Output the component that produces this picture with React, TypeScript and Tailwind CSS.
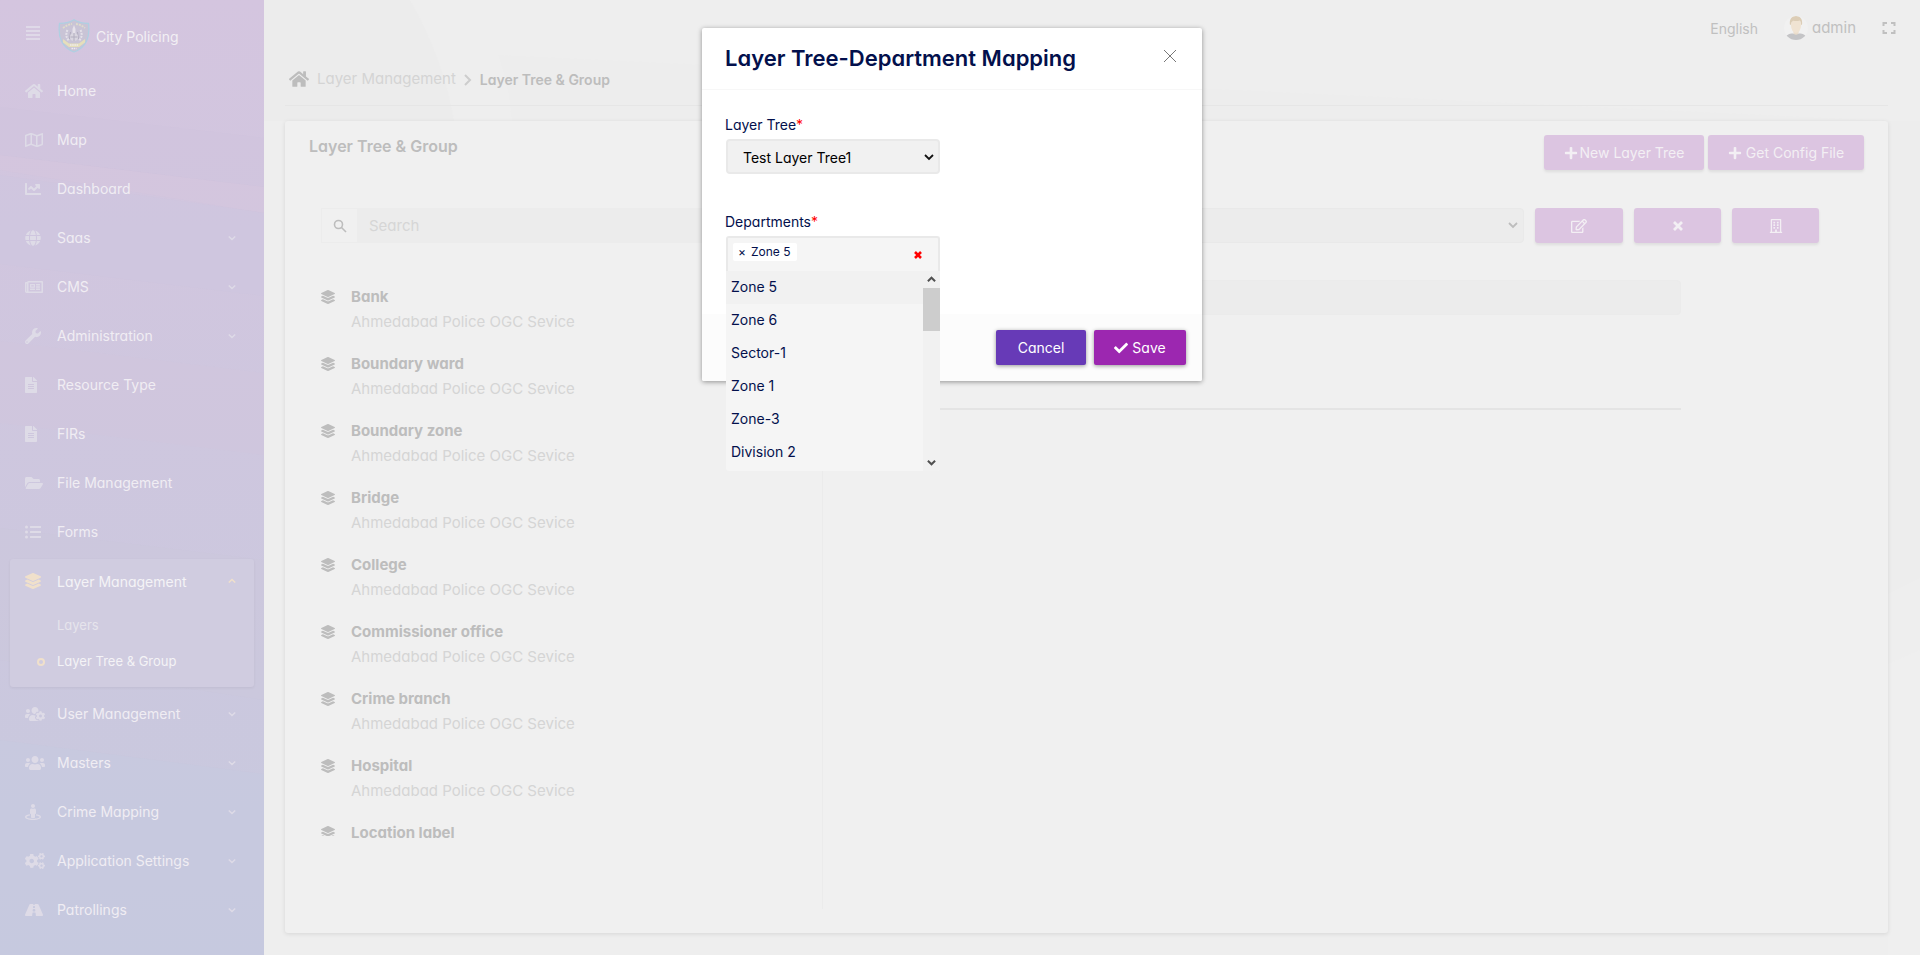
import React from "react";
import {
  FaHome, FaRegMap, FaChartLine, FaGlobe, FaRegNewspaper, FaWrench, FaFileAlt,
  FaFolderOpen, FaListUl, FaLayerGroup, FaUsersCog, FaUsers, FaStreetView, FaCogs,
  FaRoad, FaRegEdit, FaTimes, FaRegBuilding, FaPlus, FaCheck,
} from "react-icons/fa";
import type { IconType } from "react-icons";

type Item = { label: string; icon: IconType; size: string; more?: boolean };

const topItems: Item[] = [
  { label: "Home", icon: FaHome, size: "h-4 w-[18px]" },
  { label: "Map", icon: FaRegMap, size: "h-4 w-[18px]" },
  { label: "Dashboard", icon: FaChartLine, size: "h-4 w-4" },
  { label: "Saas", icon: FaGlobe, size: "h-4 w-4", more: true },
  { label: "CMS", icon: FaRegNewspaper, size: "h-4 w-[18px]", more: true },
  { label: "Administration", icon: FaWrench, size: "h-4 w-4", more: true },
  { label: "Resource Type", icon: FaFileAlt, size: "h-4 w-3" },
  { label: "FIRs", icon: FaFileAlt, size: "h-4 w-3" },
  { label: "File Management", icon: FaFolderOpen, size: "h-4 w-[18px]" },
  { label: "Forms", icon: FaListUl, size: "h-4 w-4" },
];

const bottomItems: Item[] = [
  { label: "User Management", icon: FaUsersCog, size: "h-4 w-5", more: true },
  { label: "Masters", icon: FaUsers, size: "h-4 w-5", more: true },
  { label: "Crime Mapping", icon: FaStreetView, size: "h-4 w-4", more: true },
  { label: "Application Settings", icon: FaCogs, size: "h-4 w-5", more: true },
  { label: "Patrollings", icon: FaRoad, size: "h-4 w-[18px]", more: true },
];

const service = "Ahmedabad Police OGC Sevice";

const layers: { name: string; source?: string }[] = [
  { name: "Bank", source: service },
  { name: "Boundary ward", source: service },
  { name: "Boundary zone", source: service },
  { name: "Bridge", source: service },
  { name: "College", source: service },
  { name: "Commissioner office", source: service },
  { name: "Crime branch", source: service },
  { name: "Hospital", source: service },
  { name: "Location label" },
];

const departments = ["Zone 5", "Zone 6", "Sector-1", "Zone 1", "Zone-3", "Division 2"];

function Chevron({ className, up = false }: { className: string; up?: boolean }) {
  return (
    <svg viewBox="0 0 10 10" className={className} fill="none" stroke="currentColor" aria-hidden="true">
      <path d={up ? "M1 7l4-4 4 4" : "M1 3l4 4 4-4"} strokeWidth="1.8" />
    </svg>
  );
}

function Crest() {
  return (
    <svg viewBox="0 0 32 34" className="h-[34px] w-8 shrink-0" aria-hidden="true">
      <path d="M16 .8c4 2.600 9 3.600 14.500 3.500.8 6 .8 12-2 18-2.400 5-7 8.700-12.500 10.700C10.500 31 5.900 27.300 3.500 22.300.7 16.300.7 10.300 1.500 4.300 7 4.400 12 3.400 16 .8z" fill="#c9c4d6" stroke="#aed0e2" strokeWidth="1.200" />
      <path d="M5 9c3-2.500 6-3.500 9-4M18 5c3 .5 6 1.500 9 4" fill="none" stroke="#dfdccb" strokeWidth="1.800" strokeDasharray="2 1" />
      <path d="M16 6l1.500 4v6h-3v-6z" fill="#e6e2ea" />
      <path d="M9.500 11c-2 4-1.500 8 2 11M22.500 11c2 4 1.500 8-2 11" fill="none" stroke="#e4e1e9" strokeWidth="2" strokeDasharray="2 1" />
      <path d="M12.500 13l-1 7M19.500 13l1 7" stroke="#b2aebf" strokeWidth="1" />
      <circle cx="16" cy="18" r="4" fill="#d9d6e0" />
      <path d="M16 14v8M12.500 18h7" stroke="#b2aebf" strokeWidth="1" />
      <path d="M5 20l6 4.500h10l6-4.500v3.500L21 28H11l-6-4.500z" fill="#e5dfbb" />
      <path d="M12 26h8M13.500 29.500h5" stroke="#eeeaf0" strokeWidth="1.500" strokeDasharray="1.500 .7" />
    </svg>
  );
}

function Avatar() {
  return (
    <svg viewBox="0 0 24 24" className="size-6" aria-hidden="true">
      <defs>
        <clipPath id="avatar-round"><circle cx="12" cy="12" r="12" /></clipPath>
      </defs>
      <g clipPath="url(#avatar-round)">
        <rect width="24" height="24" fill="#f1f1f1" />
        <path d="M9.500 14h5v5h-5z" fill="#e9dccb" />
        <path d="M1 24c0-5 4-6.500 8-6.500 1.500 1.500 4.500 1.500 6 0 4 0 8 1.500 8 6.500z" fill="#c4c4c6" />
        <ellipse cx="12" cy="9.500" rx="5" ry="7.500" fill="#f0e3d2" />
        <path d="M6 9C5 3 8 0 12 0s7 3 6 9l-1-.5c0-2-.5-3.500-1.500-4-2 1.200-5 .3-6.500.3-1.200.7-2 2-2 3.700z" fill="#dccdb6" />
      </g>
    </svg>
  );
}

function MenuItem({ item }: { item: Item }) {
  const Icon = item.icon;
  return (
    <li>
      <a href="#" className="flex h-[49px] items-center pl-[25px] pr-7 text-[14px] text-[#f0edf3]">
        <span className="flex w-8 text-[#dedbe7]"><Icon className={item.size} /></span>
        <span className="flex-1">{item.label}</span>
        {item.more && <Chevron className="size-2 text-[#dedbe7]" />}
      </a>
    </li>
  );
}

function Sidebar() {
  return (
    <aside className="relative w-[264px] shrink-0 overflow-hidden bg-gradient-to-b from-[#d4c5df] to-[#c7c9de]">
      <svg className="absolute inset-0 size-full" viewBox="0 0 264 955" preserveAspectRatio="none" aria-hidden="true">
        <path d="M0 107L264 138V187L0 155z" fill="#cfc4de" opacity=".5" />
        <path d="M0 155L264 187V213L0 170z" fill="#d5c5de" opacity=".5" />
        <path d="M0 175L264 213V296L0 264z" fill="#cec5df" opacity=".5" />
        <path d="M0 341L264 373V455L0 423z" fill="#d2c6dc" opacity=".35" />
        <path d="M0 528L264 560V700L0 660z" fill="#cbc7dc" opacity=".5" />
        <path d="M0 740L264 774V955H0z" fill="#c5cadf" opacity=".5" />
      </svg>
      <div className="relative">
        <div className="flex h-[66px] items-center pb-0.5 pl-[26px] pt-2">
          <button type="button" aria-label="Toggle menu" className="mb-1.5 mr-4 flex w-4 flex-col gap-0.5 pr-0.5">
            <span className="h-0.5 bg-[#dfd9e8]" />
            <span className="h-0.5 bg-[#dfd9e8]" />
            <span className="h-0.5 bg-[#dfd9e8]" />
            <span className="h-0.5 bg-[#dfd9e8]" />
          </button>
          <Crest />
          <span className="ml-1.5 text-[14px] text-[#f2f0f4]">City Policing</span>
        </div>
        <nav>
          <ul>{topItems.map((i) => <MenuItem key={i.label} item={i} />)}</ul>
          <div className="mx-[10px] mb-0.5 mt-[3px] h-32 rounded-[3px] bg-[#d0cce0] shadow-[0_1px_3px_rgba(0,0,0,0.06)]">
            <a href="#" className="flex h-11 items-center pl-[15px] pr-[18px] text-[14px] text-[#f4f3f6]">
              <span className="flex w-8"><FaLayerGroup className="size-4 text-[#f0e0cb]" /></span>
              <span className="flex-1">Layer Management</span>
              <Chevron up className="size-2 text-[#f0e0cb]" />
            </a>
            <a href="#" className="flex h-[45px] items-center pl-[47px] text-[13px] text-[#e6e4ec]">Layers</a>
            <a href="#" className="flex h-7 items-center pl-[27px] text-[13px] text-[#f4f3f6]">
              <span className="mr-3 size-2 rounded-full border-2 border-[#f0e0cb]" />
              Layer Tree &amp; Group
            </a>
          </div>
          <ul>{bottomItems.map((i) => <MenuItem key={i.label} item={i} />)}</ul>
        </nav>
      </div>
    </aside>
  );
}

const fadedButton =
  "flex h-[35px] items-center justify-center rounded-[3px] bg-[#dcc5e1] text-[14px] text-[#f3eff4] shadow-[0_2px_3px_rgba(0,0,0,0.08)]";

function Main() {
  return (
    <main className="relative flex min-w-0 flex-1 flex-col bg-[#eeeeee] pl-[21px] pr-8 text-[#bdbdbd]">
      <svg className="absolute inset-0 size-full" viewBox="0 0 1656 955" preserveAspectRatio="none" aria-hidden="true">
        <path d="M0 0H146Q180 60 190 121H0z" fill="#ececec" />
        <path d="M234 55Q244 80 248 121H1656V578L1624 594V121z" fill="#ededed" />
        <path d="M1656 650L1624 664V955H1656z" fill="#efefef" />
      </svg>
      <header className="relative flex h-14 shrink-0 items-center justify-end text-[14px] text-[#c0c0c0]">
        <button type="button" className="mr-[26px]">English</button>
        <button type="button" className="flex items-center gap-1 text-[15px]"><Avatar />admin</button>
        <button type="button" aria-label="Full screen" className="-mr-2 ml-[26px]">
          <svg viewBox="0 0 14 14" className="size-3.5" fill="none" stroke="currentColor" strokeWidth="2" aria-hidden="true">
            <path d="M1.500 5V2H5M9 2h3.500v3M12.500 9v3H9M5 12H1.500V9" />
          </svg>
        </button>
      </header>
      <nav aria-label="Breadcrumb" className="relative flex h-[50px] shrink-0 items-center border-b border-[#e6e6e6] pb-0.5 pl-1 text-[15px]">
        <FaHome className="mb-0.5 size-5" />
        <a href="#" className="ml-2 text-[#d4d4d4]">Layer Management</a>
        <svg viewBox="0 0 8 12" className="mx-2 h-3 w-2 text-[#cdcdcd]" fill="none" stroke="currentColor" strokeWidth="2" aria-hidden="true"><path d="M1 1l5 5-5 5" /></svg>
        <span className="text-[14px] font-semibold">Layer Tree &amp; Group</span>
      </nav>
      <section className="relative mt-[15px] mb-[22px] flex flex-1 flex-col rounded-[3px] bg-[#f0f0f0] shadow-[0_1px_4px_rgba(0,0,0,0.1)]">
        <div className="flex h-[87px] items-start justify-between px-6 pt-3.5">
          <h1 className="text-[16px] font-semibold leading-[22px]">Layer Tree &amp; Group</h1>
          <div className="flex gap-1">
            <button type="button" className={fadedButton + " w-40 gap-0.5"}><FaPlus className="size-3.5" />New Layer Tree</button>
            <button type="button" className={fadedButton + " w-[156px] gap-1"}><FaPlus className="size-3.5" />Get Config File</button>
          </div>
        </div>
        <div className="flex flex-1">
          <div className="mb-6 w-[538px] shrink-0 border-r border-[#ebebeb] pl-9">
            <div className="flex h-[35px] w-[460px] border border-[#ececec]">
              <span className="flex w-[35px] items-center justify-center">
                <svg viewBox="0 0 14 14" className="size-3.5" fill="none" stroke="currentColor" strokeWidth="1.600" aria-hidden="true"><circle cx="5.500" cy="5.500" r="4" /><path d="M8.500 8.500L13 13" /></svg>
              </span>
              <input type="text" aria-label="Search" placeholder="Search" className="min-w-0 flex-1 bg-[#ececec] px-3 pt-0.5 text-[15px] placeholder:text-[#d6d6d6]" />
            </div>
            <ul className="mt-[41px]">
              {layers.map(({ name, source }) => (
                <li key={name} className="flex h-[67px]">
                  <span className={source ? "h-6 w-3.5 pt-1.5" : "h-4 w-3.5 overflow-hidden pt-1.5"}>
                    <FaLayerGroup className="size-3.5" />
                  </span>
                  <div className="ml-4 text-[15px]">
                    <p className="h-[25px] font-bold leading-[25px]">{name}</p>
                    {source && <p className="h-[25px] leading-[25px] text-[#d5d5d5]">{source}</p>}
                  </div>
                </li>
              ))}
            </ul>
          </div>
          <div className="flex-1 pl-6 pr-[69px]">
            <div className="flex gap-[11px]">
              <div className="relative min-w-0 flex-1">
                <select aria-label="Layer tree" className="h-[35px] w-full appearance-none rounded-[4px] border border-[#e9e9e9] bg-[#ececec]"><option></option></select>
                <Chevron className="pointer-events-none absolute right-1.5 top-3 size-2.5" />
              </div>
              <button type="button" aria-label="Edit" className={fadedButton + " w-[88px]"}><FaRegEdit className="size-4" /></button>
              <button type="button" aria-label="Remove" className={fadedButton + " w-[87px]"}>
                <svg viewBox="0 0 10 10" className="size-2.5" stroke="currentColor" strokeWidth="2.800" aria-hidden="true"><path d="M1 1l8 8M9 1L1 9" /></svg>
              </button>
              <button type="button" aria-label="Departments" className={fadedButton + " w-[87px]"}><FaRegBuilding className="size-3.5" /></button>
            </div>
            <input type="text" aria-label="Layer tree name" readOnly className="mt-[37px] block h-[35px] w-[calc(100%-138px)] rounded-[4px] border border-[#ebebeb] bg-[#ececec]" />
            <div className="mr-[138px] mt-[93px] h-0.5 bg-[#e4e4e4]" />
          </div>
        </div>
      </section>
    </main>
  );
}

function MappingDialog() {
  return (
    <div className="absolute inset-0 flex items-start justify-center pt-7">
      <form role="dialog" aria-labelledby="dialog-title" className="mr-4 w-[500px] rounded-[2px] bg-white text-[14px] text-[#03104c] shadow-[0_1px_5px_rgba(0,0,0,0.4)]">
        <div className="flex h-[62px] items-center justify-between border-b border-[#f7f7f7] pl-[23px] pr-6">
          <h2 id="dialog-title" className="text-[22px] font-semibold">Layer Tree-Department Mapping</h2>
          <button type="button" aria-label="Close" className="mb-1.5">
            <svg viewBox="0 0 16 16" className="size-4" stroke="#777" strokeWidth="1" aria-hidden="true"><path d="M2 2l12 12M14 2L2 14" /></svg>
          </button>
        </div>
        <div className="h-[224px] px-6 pt-6">
          <label htmlFor="tree" className="-ml-px flex h-[25px] items-center pb-1">Layer Tree<span className="text-[#ff0000]">*</span></label>
          <div className="relative w-[214px]">
            <select id="tree" className="h-[35px] w-full appearance-none rounded-[4px] border-2 border-[#e9e9e9] bg-[#f1f1f1] pl-[15px] pt-0.5 text-black"><option>Test Layer Tree1</option></select>
            <svg viewBox="0 0 10 10" className="pointer-events-none absolute right-1.5 top-3.5 size-2.5" fill="none" stroke="#111" strokeWidth="1.800" aria-hidden="true"><path d="M1 2l4 4 4-4" /></svg>
          </div>
          <label htmlFor="departments" className="-ml-px mt-[37px] flex h-[25px] items-center pb-1">Departments<span className="text-[#ff0000]">*</span></label>
          <div className="relative w-[214px]">
            <div className="flex h-[36px] items-start rounded-t-[3px] border-2 border-b-0 border-[#e9e9e9] bg-[#f5f5f5] pl-[5px] pt-[5px]">
              <span className="flex h-[18px] shrink-0 items-center rounded-[2px] bg-white pr-1.5 text-[12px]">
                <button type="button" aria-label="Remove Zone 5" className="w-[18px] text-center">×</button>Zone 5
              </span>
              <input id="departments" type="text" className="h-[18px] min-w-0 flex-1 bg-transparent outline-none" />
              <button type="button" aria-label="Clear all" className="mr-2.5 flex h-6 w-5 items-center justify-center text-[#ff0000]">
                <svg viewBox="0 0 8 8" className="size-2" stroke="currentColor" strokeWidth="2.600" aria-hidden="true"><path d="M1 1l6 6M7 1L1 7" /></svg>
              </button>
            </div>
            <div className="absolute left-0 top-[35px] flex h-[200px] w-[214px] overflow-hidden rounded-b-[3px] bg-[#f5f5f5]">
              <ul role="listbox" aria-label="Departments" className="flex-1">
                {departments.map((d) => (
                  <li key={d} role="option" aria-selected={d === "Zone 5"} className="flex h-[33px] items-center pb-0.5 pl-[5px] aria-selected:bg-[#f1f1f1]">{d}</li>
                ))}
              </ul>
              <div className="flex w-[17px] flex-col items-center bg-[#f1f1f1]" aria-hidden="true">
                <svg viewBox="0 0 10 10" className="my-1 size-[9px] shrink-0" fill="none" stroke="#505050" strokeWidth="2.200"><path d="M1 7l4-4 4 4" /></svg>
                <div className="h-[43px] w-full bg-[#cdcdcd]" />
                <svg viewBox="0 0 10 10" className="mb-1 mt-auto size-[9px] shrink-0" fill="none" stroke="#505050" strokeWidth="2.200"><path d="M1 3l4 4 4-4" /></svg>
              </div>
            </div>
          </div>
        </div>
        <div className="flex h-[67px] items-center justify-end gap-2 rounded-b-[2px] bg-[#fcfcfc] pr-4">
          <button type="button" className="h-[35px] w-[90px] rounded-[2px] bg-[#673ab7] text-white shadow-[0_1px_4px_rgba(0,0,0,0.4)]">Cancel</button>
          <button type="submit" className="flex h-[35px] w-[92px] items-center justify-center gap-1 rounded-[2px] bg-[#9c27b0] text-white shadow-[0_1px_4px_rgba(0,0,0,0.4)]"><FaCheck className="size-3.5" />Save</button>
        </div>
      </form>
    </div>
  );
}

export default function App() {
  return (
    <div className="relative flex min-h-screen overflow-hidden font-['Inter',sans-serif] [font-feature-settings:'cv11']">
      <Sidebar />
      <Main />
      <MappingDialog />
    </div>
  );
}
